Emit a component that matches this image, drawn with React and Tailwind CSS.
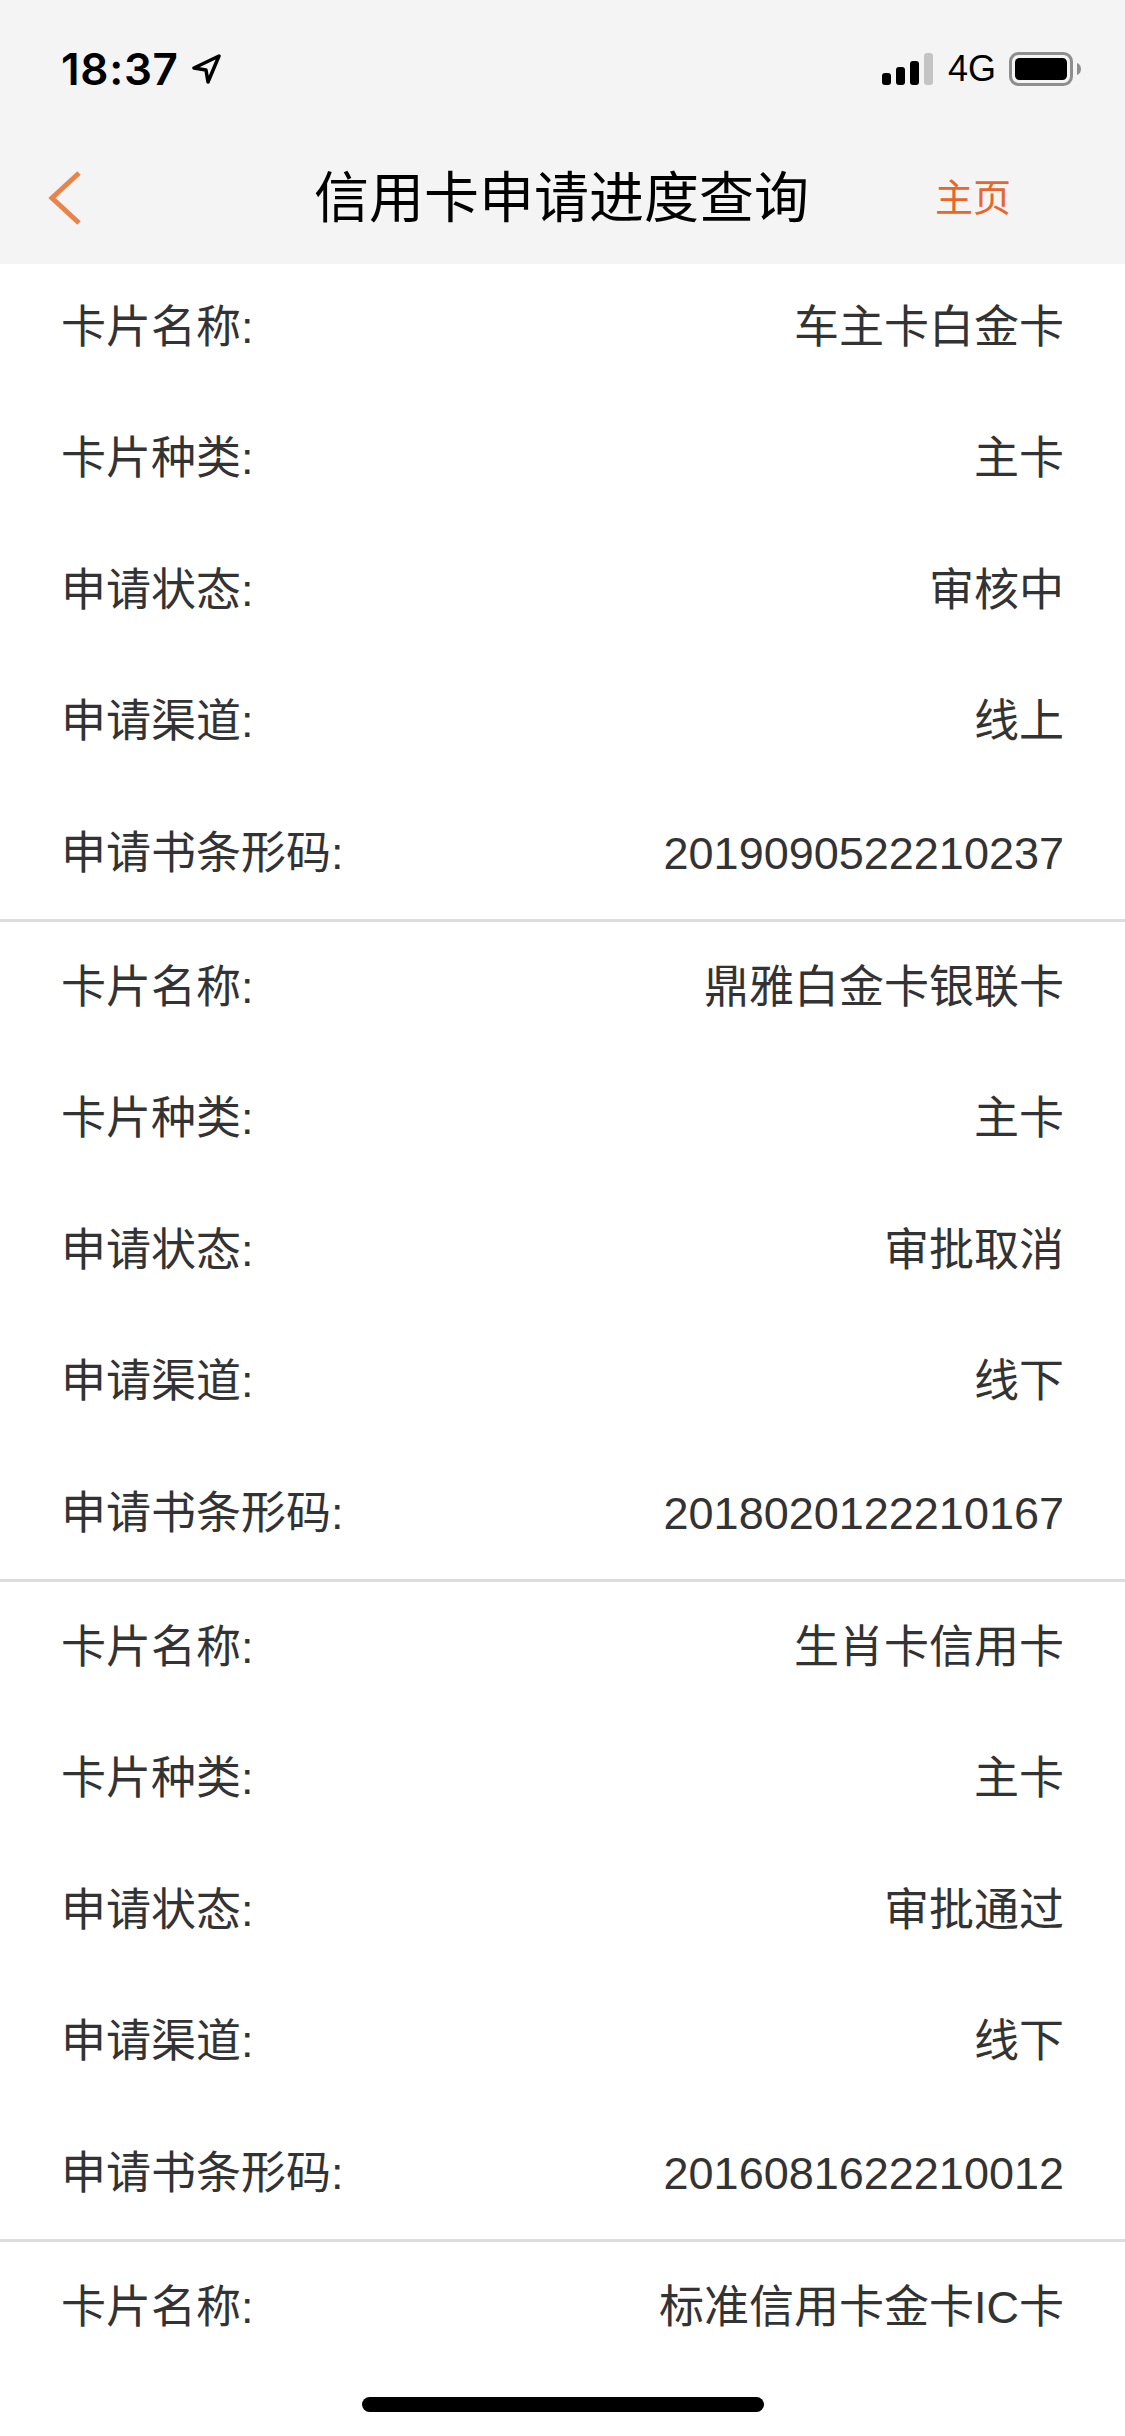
import React from 'react';

const cards = [
  { name: '车主卡白金卡', type: '主卡', status: '审核中', channel: '线上', code: '2019090522210237' },
  { name: '鼎雅白金卡银联卡', type: '主卡', status: '审批取消', channel: '线下', code: '2018020122210167' },
  { name: '生肖卡信用卡', type: '主卡', status: '审批通过', channel: '线下', code: '2016081622210012' },
];

const cjk = "font-['Liberation_Sans','Noto_Sans_CJK_SC',sans-serif]";

const Row = ({ label, value }) => (
  <div className="flex h-[131px] flex-1 items-center justify-between pl-[61px] pr-[61px] text-[45px] text-[#333333]">
    <span>{label}</span>
    <span>{value}</span>
  </div>
);

// Signal bars, last one is dimmed
const Signal = () => (
  <svg width="51" height="32" viewBox="0 0 51 32">
    <rect x="0" y="20" width="9" height="12" rx="3" fill="#000" />
    <rect x="14" y="14" width="9" height="18" rx="3" fill="#000" />
    <rect x="28" y="8" width="9" height="24" rx="3" fill="#000" />
    <rect x="42" y="0" width="9" height="32" rx="3" fill="#c4c4c4" />
  </svg>
);

const Battery = () => (
  <svg width="72" height="34" viewBox="0 0 72 34">
    <rect x="1.5" y="1.5" width="61" height="31" rx="8" fill="none" stroke="#8e8e8e" strokeWidth="3" />
    <rect x="6" y="6" width="52" height="22" rx="4.5" fill="#000" />
    <path d="M68 11 C71 12 72 14.500 72 17 C72 19.500 71 22 68 23 Z" fill="#8e8e8e" />
  </svg>
);

const LocationArrow = () => (
  <svg width="30" height="30" viewBox="0 0 30 30">
    <path d="M28 2 L3 14 L15 16 L17 28 Z" fill="none" stroke="#000" strokeWidth="3.500" strokeLinejoin="round" />
  </svg>
);

const BackChevron = () => (
  <svg width="34" height="54" viewBox="0 0 34 54">
    <path d="M31 2 L4 27 L31 52" fill="none" stroke="#e8844a" strokeWidth="5" />
  </svg>
);

const App = () => {
  return (
    <div className={`relative h-[2436px] w-[1125px] overflow-hidden bg-white ${cjk}`}>
      <header className="relative z-10 bg-[#f4f4f4]">
        <div className="flex h-[132px] items-center justify-between pl-[61px] pr-[44px] pt-[6px]">
          <div className="flex items-center gap-[12px]">
            <span className="font-['Inter',sans-serif] text-[44px] font-semibold leading-none tracking-[0.7px] text-black">18:37</span>
            <LocationArrow />
          </div>
          <div className="flex items-center gap-[15px]">
            <Signal />
            <span className="font-['Liberation_Sans',sans-serif] text-[36px] leading-none text-black">4G</span>
            <div className="-ml-[2px]">
              <Battery />
            </div>
          </div>
        </div>
        <div className="flex h-[132px] items-center justify-between pl-[48px] pr-[114px]">
          <BackChevron />
          <h1 className="pl-[106px] text-[55px] font-normal leading-none text-black">信用卡申请进度查询</h1>
          <span className="text-[38px] leading-none text-[#e8662a]">主页</span>
        </div>
      </header>

      <main className="-mt-[2px]">
        {cards.map((card) => (
          <section key={card.code} className="flex h-[660px] flex-col border-b-[3px] border-[#dddddd]">
            <Row label="卡片名称:" value={card.name} />
            <Row label="卡片种类:" value={card.type} />
            <Row label="申请状态:" value={card.status} />
            <Row label="申请渠道:" value={card.channel} />
            <Row label="申请书条形码:" value={card.code} />
          </section>
        ))}
        <section>
          <Row label="卡片名称:" value="标准信用卡金卡IC卡" />
        </section>
      </main>

      <div className="absolute bottom-[24px] left-[362px] h-[15px] w-[402px] rounded-full bg-black" />
    </div>
  );
};

export default App;
